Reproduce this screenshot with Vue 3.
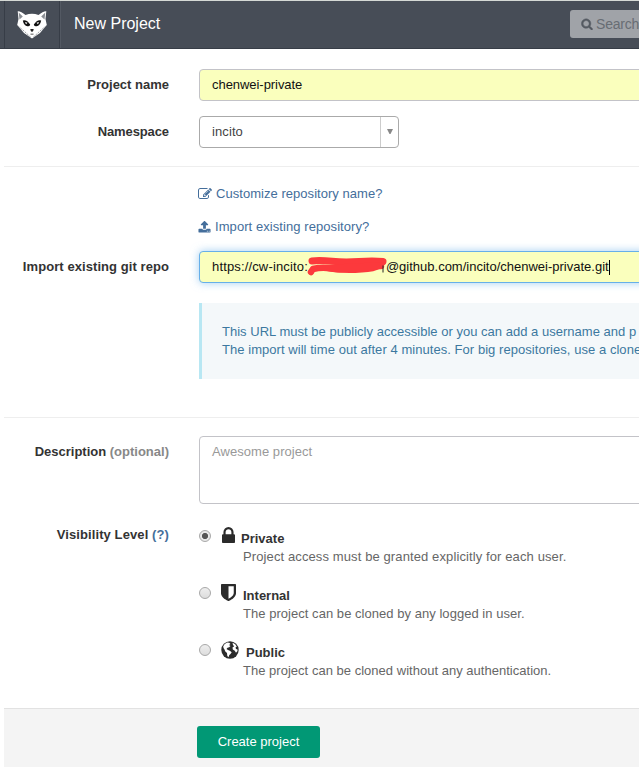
<script setup>
const levels = [
  { id: 'lock', name: 'Private', text: 'Project access must be granted explicitly for each user.', checked: true },
  { id: 'shield', name: 'Internal', text: 'The project can be cloned by any logged in user.', checked: false },
  { id: 'globe', name: 'Public', text: 'The project can be cloned without any authentication.', checked: false },
]
</script>

<template>
  <div class="page">
    <header class="navbar">
      <div class="logo">
        <svg viewBox="0 0 30 29" width="30" height="29">
          <path d="M.7 1.200Q4 1 8.500 5Q15 2.500 21.500 5Q26 1 29.300 1.200L28.500 9L29.800 15L23 23L15 28.500L7 23L.2 15L1.500 9Z" fill="#fff" />
          <path d="M1.700 2.500L5.800 6.500L2.500 9.500ZM28.300 2.500L24.200 6.500L27.500 9.500Z" fill="#8a8e94" />
          <path d="M1 16L7 21L14 27.500M29 16L23 21L16 27.500" stroke="#9b9ea2" stroke-width="1" stroke-dasharray="2 1" fill="none" />
          <path d="M5.800 10.500Q9.500 9 13.200 14.500Q12.700 16.600 10.500 16.300Q6.800 15.500 5.800 10.500ZM24.200 10.500Q20.500 9 16.800 14.500Q17.300 16.600 19.500 16.300Q23.200 15.500 24.200 10.500Z" fill="#111" />
          <path d="M8 12L10.500 12.700L9 14.200ZM22 12L19.500 12.700L21 14.200Z" fill="#fff" />
          <path d="M13.300 19H16.700L16.200 21L15 22L13.800 21ZM13.500 23.700H16.500V24.500H13.500Z" fill="#222" />
        </svg>
      </div>
      <h1 class="title">New Project</h1>
      <div class="search">
        <svg class="search-icon" viewBox="0 0 1792 1792" width="12" height="12"><path fill="#555b62" stroke="#555b62" stroke-width="70" d="M1216 832q0-185-131.500-316.500t-316.500-131.500-316.500 131.500-131.500 316.500 131.500 316.500 316.500 131.500 316.500-131.500 131.500-316.500zm512 832q0 52-38 90t-90 38q-54 0-90-38l-343-342q-179 124-399 124-143 0-273.500-55.500t-225-150-150-225-55.500-273.500 55.500-273.500 150-225 225-150 273.500-55.500 273.500 55.500 225 150 150 225 55.500 273.500q0 220-124 399l343 343q37 37 37 90z" /></svg>
        <span class="t-search">Search</span>
      </div>
    </header>

    <main class="form">
      <div class="row name-row">
        <label class="label">Project name</label>
        <div class="field filled"><span class="t-name">chenwei-private</span></div>
      </div>
      <div class="row ns-row">
        <label class="label t-nslabel">Namespace</label>
        <div class="field select">
          <span class="t-ns">incito</span>
          <span class="arrow"><svg width="6" height="5" viewBox="0 0 6 5"><path d="M0 0H6L3.500 5H2.500Z" fill="#888" /></svg></span>
        </div>
      </div>
      <hr class="rule" />
      <a class="link link-a">
        <svg viewBox="0 0 1792 1792" width="14" height="14"><path fill="#446e9b" d="M888 1184l116-116-152-152-116 116v56h96v96h56zm440-720q-16-16-33 1l-350 350q-17 17-1 33t33-1l350-350q17-17 1-33zm80 594v190q0 119-84.500 203.500t-203.500 84.500h-832q-119 0-203.500-84.500t-84.500-203.500v-832q0-119 84.500-203.500t203.500-84.500h832q63 0 117 25 15 7 18 23 3 17-9 29l-49 49q-14 14-32 8-23-6-45-6h-832q-66 0-113 47t-47 113v832q0 66 47 113t113 47h832q66 0 113-47t47-113v-126q0-13 9-22l64-64q15-15 35-7t20 29zm-96-738l288 288-672 672h-288v-288zm444 132l-92 92-288-288 92-92q28-28 68-28t68 28l152 152q28 28 28 68t-28 68z" /></svg>
        <span>Customize repository name?</span>
      </a>
      <a class="link link-b">
        <svg viewBox="0 0 1792 1792" width="13" height="14"><path fill="#446e9b" d="M1344 1472q0-26-19-45t-45-19-45 19-19 45 19 45 45 19 45-19 19-45zm256 0q0-26-19-45t-45-19-45 19-19 45 19 45 45 19 45-19 19-45zm128-224v320q0 40-28 68t-68 28h-1472q-40 0-68-28t-28-68v-320q0-40 28-68t68-28h427q21 56 70.500 92t110.500 36h256q61 0 110.500-36t70.500-92h427q40 0 68 28t28 68zm-325-648q-17 40-59 40h-256v448q0 26-19 45t-45 19h-256q-26 0-45-19t-19-45v-448h-256q-42 0-59-40-17-39 14-69l448-448q18-19 45-19t45 19l448 448q31 30 14 69z" /></svg>
        <span>Import existing repository?</span>
      </a>
      <div class="row repo-row">
        <label class="label t-repo">Import existing git repo</label>
        <div class="field filled focused">
          <span class="url-a">https://cw-incito:</span>
          <span class="secret">
            <svg viewBox="0 0 80 24" width="80" height="24">
              <path d="M5 6Q12 5 25 6.300T52 6.500T76 6.500" stroke="#fc393c" stroke-width="7" stroke-linecap="round" fill="none" />
              <path d="M4 17L6 14Q15 12 24 13.500T48 13T74 11" stroke="#fc393c" stroke-width="6.500" stroke-linecap="round" stroke-linejoin="round" fill="none" />
              <path d="M18 10L76 7L74 13Q68 17 55 17.500Q35 19 20 16Z" fill="#fc393c" />
              <path d="M76 10.500V17.500" stroke="#222" stroke-width="1" />
            </svg>
          </span>
          <span class="url-b">@github.com/incito/chenwei-private.git</span>
          <i class="caret"></i>
        </div>
      </div>
      <div class="alert">
        <p class="alert-a">This URL must be publicly accessible or you can add a username and p</p>
        <p class="alert-b">The import will time out after 4 minutes. For big repositories, use a clone</p>
      </div>
      <hr class="rule rule-b" />
      <div class="row desc-row">
        <label class="label">Description <span class="muted">(optional)</span></label>
        <div class="field area"><span class="t-desc">Awesome project</span></div>
      </div>
      <div class="row vis-row">
        <label class="label t-vis">Visibility Level <a class="help">(?)</a></label>
        <div class="levels">
          <div v-for="l in levels" :key="l.id" class="level">
            <i class="radio" :class="{ on: l.checked }"></i>
            <div class="level-body">
              <div class="level-head" :class="l.id">
                <svg v-if="l.id === 'lock'" width="13" height="16" viewBox="320 128 1152 1408" preserveAspectRatio="none"><path fill="#2b2b2b" d="M640 768h512v-192q0-106-75-181t-181-75-181 75-75 181v192zm832 96v576q0 40-28 68t-68 28h-960q-40 0-68-28t-28-68v-576q0-40 28-68t68-28h32v-192q0-184 132-316t316-132 316 132 132 316v192h32q40 0 68 28t28 68z" /></svg>
                <svg v-else-if="l.id === 'shield'" width="15" height="17" viewBox="256 128 1280 1536" preserveAspectRatio="none"><path fill="#2b2b2b" d="M1344 960v-640h-448v1137q119-63 213-137 235-184 235-360zm192-768v768q0 86-33.500 170.500t-83 150-118 127.500-126.500 103-121 77.500-89.500 49.500-42.500 20q-12 6-26 6t-26-6q-16-7-42.500-20t-89.500-49.500-121-77.500-126.500-103-118-127.500-83-150-33.500-170.500v-768q0-26 19-45t45-19h1152q26 0 45 19t19 45z" /></svg>
                <svg v-else width="18" height="18" viewBox="0 0 18 18">
                  <circle cx="9" cy="9" r="8.700" fill="#2b2b2b" />
                  <path d="M3.500 3.200L6 1.500L8.300 1.700L9.500 3L8 4L9.500 5L8.200 6.200L6.500 6.700L5.500 8L7 9L8.800 9.700L10.700 11.200L9.500 13L8.300 14L7.500 16.300L6.300 15L6 12L4.300 10.500L3.500 8.500L2.500 7L2.200 5.200Z" fill="#fff" />
                  <path d="M11.500 1.800L14 3L15.800 5.500L14.500 6.500L15 8L16.500 8.500V10L15 11.700L13.800 9.700L11.800 8.500L11.500 6.500L13.200 5.200L12 4Z" fill="#fff" />
                </svg>
                <b>{{ l.name }}</b>
              </div>
              <div class="level-text" :class="'txt-' + l.id">{{ l.text }}</div>
            </div>
          </div>
        </div>
      </div>
    </main>

    <footer class="actions"><button class="btn" type="button">Create project</button></footer>
  </div>
</template>

<style>
body { background: #fff; overflow: hidden; }
</style>

<style scoped>
* { box-sizing: border-box; }
.page { width: 639px; height: 767px; overflow: hidden; font: 13px/18px "Liberation Sans", Arial, sans-serif; color: #333; display: flex; flex-direction: column; }
.page svg { display: block; flex: none; }
.page span, .page p, .page b { white-space: nowrap; }
.navbar { height: 49px; flex: none; display: flex; align-items: center; background: #474d57; border-top: 1px solid #d5d9d5; border-bottom: 1px solid #373d47; padding-left: 4px; }
.logo { width: 56px; height: 47px; padding: 9px 0 0 12px; border-left: 1px solid #373d47; border-right: 1px solid #373d47; box-shadow: 1px 0 #535963; }
.title { margin: 0 0 1px 14px; font-size: 16px; line-height: 20px; font-weight: 400; color: #fff; width: 100px; white-space: nowrap; }
.search { margin: 0 0 2px auto; width: 69px; height: 28px; display: flex; align-items: center; gap: 3px; padding-left: 11px; background: #a0a3a8; border-radius: 3px 0 0 3px; color: #686d74; font-size: 14px; }
.t-search { letter-spacing: -.2px; }
.form { height: 659px; flex: none; overflow: hidden; }
.row { display: flex; }
.label { width: 169px; margin-right: 30px; flex: none; text-align: right; font-weight: bold; padding-top: 7px; white-space: nowrap; }
.t-nslabel { letter-spacing: -.1px; }
.t-repo { letter-spacing: .07px; }
.t-vis { letter-spacing: .1px; }
.t-name { letter-spacing: -.05px; }
.t-ns { letter-spacing: .1px; }
.name-row { margin-top: 20px; }
.ns-row { margin-top: 15px; }
.field { width: 460px; height: 32px; flex: none; border: 1px solid #c3c3c8; border-radius: 4px; padding: 0 12px; display: flex; align-items: center; }
.filled { background: #faffbd; color: #111; }
.select { width: 200px; border-color: #aaa; padding-right: 0; justify-content: space-between; color: #444; }
.arrow { width: 18px; height: 30px; border-left: 1px solid #ccc; display: flex; align-items: center; justify-content: center; padding-bottom: 2px; }
.rule { margin: 18px 0 0 4px; border: 0; height: 1px; background: #eee; }
.link { display: flex; align-items: center; height: 18px; color: #446e9b; margin-left: 198px; gap: 4px; letter-spacing: .04px; }
.link-a { margin-top: 18px; }
.link-b { margin-top: 15px; letter-spacing: .07px; }
.repo-row { margin-top: 15px; }
.focused { border-color: #66afe9; box-shadow: 0 0 8px rgba(102, 175, 233, .6); }
.url-a { letter-spacing: .15px; }
.secret { width: 78px; height: 24px; }
.secret svg { margin-left: -1px; }
.caret { width: 1px; height: 15px; background: #000; }
.alert { width: 440px; height: 76px; margin: 20px 0 0 199px; border-left: 3px solid #b8e7f3; background: #f4f8fa; color: #3c78a0; padding: 20px 0 0 20px; }
.alert p { margin: 0; }
.alert-a { letter-spacing: .02px; }
.alert-b { letter-spacing: .05px; }
.rule-b { margin-top: 38px; }
.desc-row { margin-top: 18px; }
.area { height: 68px; align-items: flex-start; padding-top: 6px; color: #999; }
.t-desc { letter-spacing: .05px; }
.muted { color: #888; }
.help { color: #446e9b; }
.vis-row { margin-top: 15px; }
.levels { padding-top: 8px; }
.level { height: 57px; display: flex; gap: 10px; }
.radio { width: 12px; height: 12px; flex: none; margin-top: 3px; border: 1px solid #a8a8a8; border-radius: 50%; background: linear-gradient(#eee, #ddd); }
.radio.on { background: radial-gradient(circle, #555 0 2.700px, #e8e8e8 3.500px); }
.level-head { height: 21px; display: flex; align-items: flex-start; gap: 7px; }
.level-head b { padding-top: 3px; }
.level-head.lock { gap: 6px; padding-left: 1px; }
.level-text { padding-left: 22px; color: #666; white-space: nowrap; }
.txt-lock { letter-spacing: .11px; }
.txt-shield { letter-spacing: .04px; }
.txt-globe { letter-spacing: .02px; }
.actions { flex: 1; margin-left: 4px; border-top: 1px solid #e2e2e2; background: #f4f4f4; padding: 17px 0 0 193px; }
.btn { width: 123px; height: 32px; border: 0; border-radius: 3px; background: #019875; color: #fff; font: inherit; padding: 0; }
</style>
